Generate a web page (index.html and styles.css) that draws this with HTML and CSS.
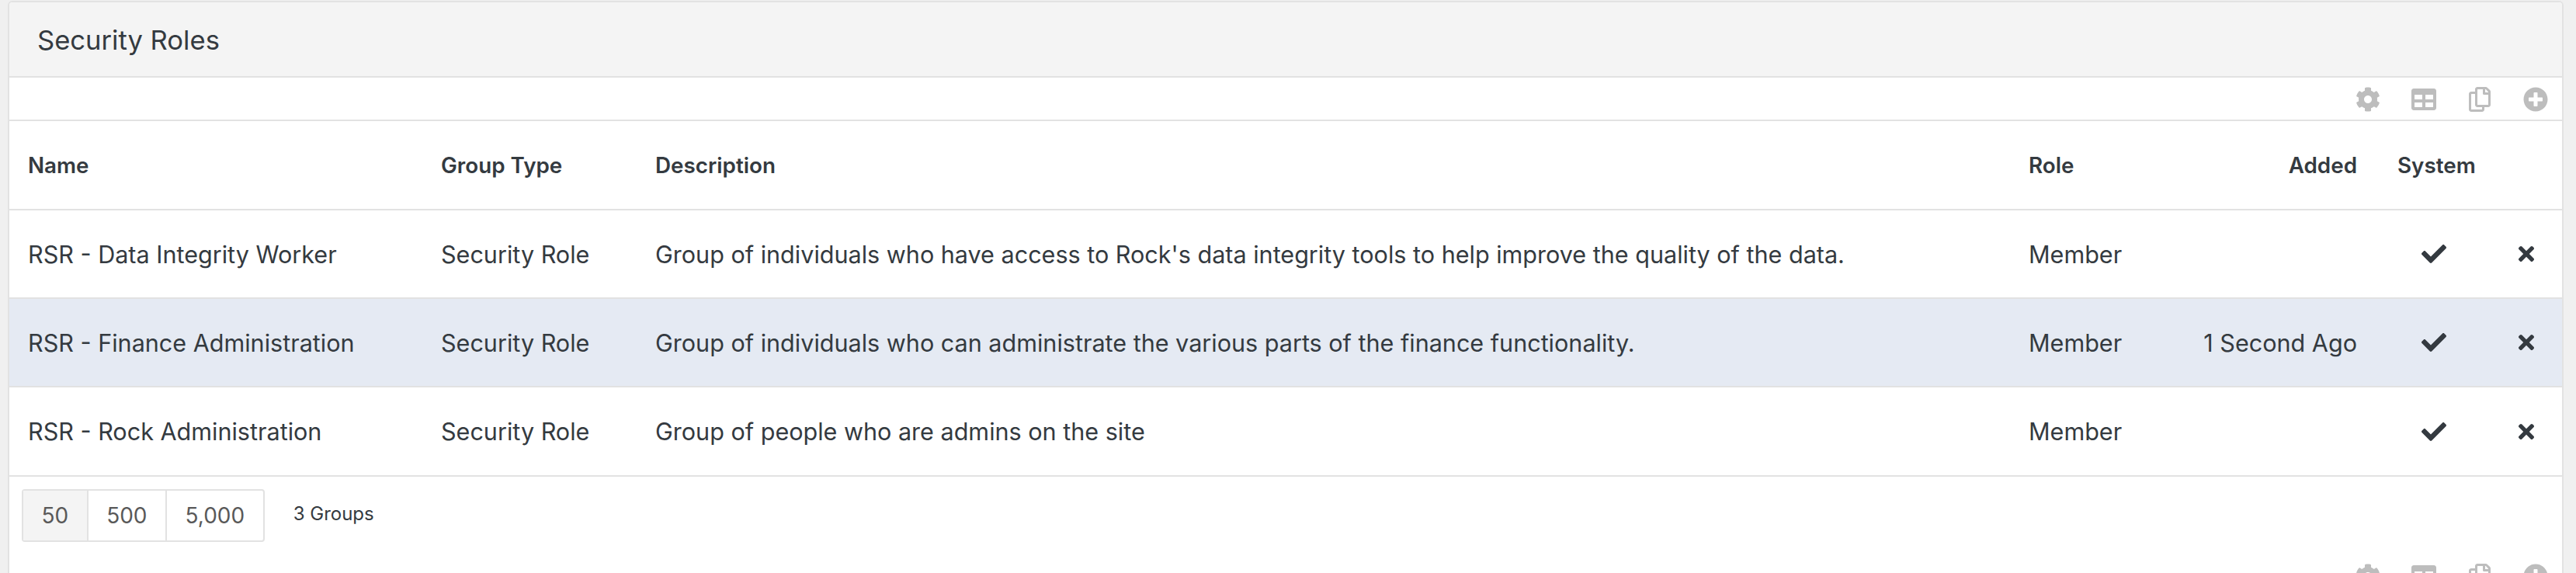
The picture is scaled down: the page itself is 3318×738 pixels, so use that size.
FILE: index.html
```html
<!DOCTYPE html>
<html lang="en">
<head>
<meta charset="utf-8">
<title>Security Roles</title>
<link rel="stylesheet" href="styles.css">
</head>
<body>
<svg class="defs" aria-hidden="true">
  <symbol id="i-cog" viewBox="0 0 512 512"><path d="M487.4 315.7l-42.6-24.6c4.3-23.2 4.3-47 0-70.2l42.6-24.6c4.9-2.8 7.1-8.6 5.5-14-11.1-35.6-30-67.8-54.7-94.6-3.8-4.1-10-5.1-14.8-2.3L380.8 110c-17.9-15.4-38.5-27.3-60.8-35.1V25.8c0-5.6-3.9-10.5-9.4-11.7-36.7-8.2-74.3-7.8-109.2 0-5.5 1.2-9.4 6.1-9.4 11.7V75c-22.2 7.9-42.8 19.8-60.8 35.1L88.7 85.5c-4.9-2.8-11-1.9-14.8 2.3-24.7 26.7-43.6 58.9-54.7 94.6-1.7 5.4.6 11.2 5.5 14L67.3 221c-4.3 23.2-4.3 47 0 70.2l-42.6 24.6c-4.9 2.8-7.1 8.6-5.5 14 11.1 35.6 30 67.8 54.7 94.6 3.8 4.1 10 5.1 14.8 2.3l42.6-24.6c17.9 15.4 38.5 27.3 60.8 35.1v49.2c0 5.6 3.9 10.5 9.4 11.7 36.7 8.2 74.3 7.8 109.2 0 5.5-1.2 9.4-6.1 9.4-11.7v-49.2c22.2-7.9 42.8-19.8 60.8-35.1l42.6 24.6c4.9 2.8 11 1.9 14.8-2.3 24.7-26.7 43.6-58.9 54.7-94.6 1.5-5.5-.7-11.3-5.6-14.1zM256 336c-44.1 0-80-35.9-80-80s35.9-80 80-80 80 35.9 80 80-35.9 80-80 80z"/></symbol>
  <symbol id="i-table" viewBox="0 0 512 512"><path d="M464 32H48C21.49 32 0 53.49 0 80v352c0 26.51 21.49 48 48 48h416c26.51 0 48-21.49 48-48V80c0-26.51-21.49-48-48-48zM224 416H64v-96h160v96zm0-160H64v-96h160v96zm224 160H288v-96h160v96zm0-160H288v-96h160v96z"/></symbol>
  <symbol id="i-copy" viewBox="0 0 448 512"><path d="M433.941 65.941l-51.882-51.882A48 48 0 0 0 348.118 0H176c-26.51 0-48 21.49-48 48v48H48c-26.51 0-48 21.49-48 48v320c0 26.51 21.49 48 48 48h224c26.51 0 48-21.49 48-48v-48h80c26.51 0 48-21.49 48-48V99.882a48 48 0 0 0-14.059-33.941zM266 464H54a6 6 0 0 1-6-6V150a6 6 0 0 1 6-6h74v224c0 26.51 21.49 48 48 48h96v42a6 6 0 0 1-6 6zm128-96H182a6 6 0 0 1-6-6V54a6 6 0 0 1 6-6h106v88c0 13.255 10.745 24 24 24h88v202a6 6 0 0 1-6 6zm6-256h-64V48h9.632c1.591 0 3.117.632 4.243 1.757l48.368 48.368a6 6 0 0 1 1.757 4.243V112z"/></symbol>
  <symbol id="i-plus" viewBox="0 0 512 512"><path d="M256 8C119 8 8 119 8 256s111 248 248 248 248-111 248-248S393 8 256 8zm144 276c0 6.6-5.4 12-12 12h-92v92c0 6.6-5.4 12-12 12h-56c-6.6 0-12-5.4-12-12v-92h-92c-6.6 0-12-5.4-12-12v-56c0-6.6 5.4-12 12-12h92v-92c0-6.6 5.4-12 12-12h56c6.6 0 12 5.4 12 12v92h92c6.6 0 12 5.4 12 12v56z"/></symbol>
  <symbol id="i-check" viewBox="0 0 512 512"><path d="M173.898 439.404l-166.4-166.4c-9.997-9.997-9.997-26.206 0-36.204l36.203-36.204c9.997-9.998 26.207-9.998 36.204 0L192 312.69 432.095 72.596c9.997-9.997 26.206-9.997 36.204 0l36.203 36.204c9.997 9.997 9.997 26.206 0 36.204l-294.4 294.401c-9.998 9.997-26.207 9.997-36.204-.001z"/></symbol>
  <symbol id="i-times" viewBox="0 0 352 512"><path d="M242.72 256l100.07-100.07c12.28-12.28 12.28-32.19 0-44.48l-22.24-22.24c-12.28-12.28-32.19-12.28-44.48 0L176 189.28 75.93 89.21c-12.28-12.28-32.19-12.28-44.48 0L9.21 111.45c-12.28 12.28-12.28 32.19 0 44.48L109.28 256 9.21 356.07c-12.28 12.28-12.28 32.19 0 44.48l22.24 22.24c12.28 12.28 32.2 12.28 44.48 0L176 322.72l100.07 100.07c12.28 12.28 32.2 12.28 44.48 0l22.24-22.24c12.28-12.28 12.28-32.19 0-44.48L242.72 256z"/></symbol>
</svg>
<section class="panel">
  <header class="panel-heading"><h1 class="panel-title">Security Roles</h1></header>
  <div class="actions">
    <svg class="act act-cog"><use href="#i-cog"/></svg>
    <svg class="act act-table"><use href="#i-table"/></svg>
    <svg class="act act-copy"><use href="#i-copy"/></svg>
    <svg class="act act-plus"><use href="#i-plus"/></svg>
  </div>
  <table class="grid">
    <colgroup>
      <col class="c-name"><col class="c-type"><col class="c-desc"><col class="c-role"><col class="c-added"><col class="c-sys"><col class="c-del">
    </colgroup>
    <thead>
      <tr><th>Name</th><th>Group Type</th><th>Description</th><th>Role</th><th class="right">Added</th><th class="sys-head">System</th><th></th></tr>
    </thead>
    <tbody>
      <tr>
        <td>RSR - Data Integrity Worker</td><td>Security Role</td>
        <td>Group of individuals who have access to Rock's data integrity tools to help improve the quality of the data.</td>
        <td>Member</td><td class="right"></td>
        <td class="center"><svg class="ic-check"><use href="#i-check"/></svg></td>
        <td class="del"><svg class="ic-times"><use href="#i-times"/></svg></td>
      </tr>
      <tr class="active">
        <td>RSR - Finance Administration</td><td>Security Role</td>
        <td>Group of individuals who can administrate the various parts of the finance functionality.</td>
        <td>Member</td><td class="right">1 Second Ago</td>
        <td class="center"><svg class="ic-check"><use href="#i-check"/></svg></td>
        <td class="del"><svg class="ic-times"><use href="#i-times"/></svg></td>
      </tr>
      <tr>
        <td>RSR - Rock Administration</td><td>Security Role</td>
        <td>Group of people who are admins on the site</td>
        <td>Member</td><td class="right"></td>
        <td class="center"><svg class="ic-check"><use href="#i-check"/></svg></td>
        <td class="del"><svg class="ic-times"><use href="#i-times"/></svg></td>
      </tr>
    </tbody>
  </table>
  <footer class="pager">
    <div class="sizes">
      <span class="size on">50</span><span class="size">500</span><span class="size">5,000</span>
    </div>
    <span class="count">3 Groups</span>
  </footer>
  <div class="actions actions-bottom">
    <svg class="act act-cog"><use href="#i-cog"/></svg>
    <svg class="act act-table"><use href="#i-table"/></svg>
    <svg class="act act-copy"><use href="#i-copy"/></svg>
    <svg class="act act-plus"><use href="#i-plus"/></svg>
  </div>
</section>
</body>
</html>
```
FILE: styles.css
```css
html, body {
  margin: 0;
  padding: 0;
  height: 738px;
  overflow: hidden;
  background: #f0f0f0;
}
body {
  font-family: Inter, "Liberation Sans", sans-serif;
  color: #343a40;
  box-sizing: border-box;
  padding: 1px 16px 0 10px;
}
.defs { display: none; }
.panel {
  background: #fff;
  border: 2px solid #e2e2e2;
  border-bottom: 0;
  border-radius: 6px 6px 0 0;
  height: 800px;
}
.panel-heading {
  height: 95px;
  background: #f4f4f4;
  border-bottom: 2px solid #e2e2e2;
  display: flex;
  align-items: center;
  padding-left: 36px;
  border-radius: 4px 4px 0 0;
}
.panel-title {
  margin: 0;
  font-size: 34.6px;
  font-weight: 400;
  color: #343a40;
}
.actions {
  height: 56px;
  box-sizing: border-box;
  border-bottom: 2px solid #e2e2e2;
  display: flex;
  align-items: flex-start;
  justify-content: flex-end;
  padding: 12px 18px 0 0;
}
.actions-bottom { border-bottom: 0; }
.act {
  height: 32px;
  fill: #bdbdbd;
  flex: none;
}
.act-cog { width: 32px; margin-right: 40px; }
.act-table { width: 32px; margin-right: 42px; }
.act-copy { width: 28px; margin-right: 42px; }
.act-plus { width: 32px; }
.grid {
  width: 100%;
  table-layout: fixed;
  border-collapse: collapse;
  font-size: 30.55px;
}
.c-name { width: 531px; }
.c-type { width: 276px; }
.c-desc { width: 1769px; }
.c-role { width: 200px; }
.c-added { width: 248px; }
.c-sys { width: 198px; }
.grid th, .grid td {
  text-align: left;
  padding: 0 0 0 25px;
  white-space: nowrap;
  vertical-align: middle;
  box-sizing: border-box;
}
.grid th {
  height: 114px;
  font-size: 27.8px;
  font-weight: 600;
}
.grid td {
  height: 114px;
  border-top: 2px solid #e2e2e2;
}
.grid th:first-child, .grid td:first-child { padding-left: 24px; }
.grid .right { text-align: right; padding: 0; }
.grid .center { text-align: center; padding: 0; }
.grid .sys-head { padding-left: 52px; }
.grid .del { text-align: center; padding: 0 26px 0 0; }
.grid tr.active td { background: #e5eaf3; }
.ic-check { width: 32px; height: 32px; fill: #343a40; display: block; margin: 0 auto; }
.ic-times { width: 20px; height: 30px; fill: #343a40; display: block; margin: 0 auto; }
.pager {
  height: 102px;
  box-sizing: border-box;
  border-top: 2px solid #e2e2e2;
  display: flex;
  align-items: flex-start;
  padding: 16px 0 0 16px;
}
.sizes {
  display: flex;
  height: 68px;
  box-sizing: border-box;
  border: 2px solid #e2e2e2;
  border-radius: 4px;
}
.size {
  display: flex;
  align-items: center;
  justify-content: center;
  font-size: 28px;
  color: #595959;
  padding: 0 23.5px;
  border-left: 2px solid #e2e2e2;
}
.size:first-child { border-left: 0; }
.size.on { background: #f4f4f4; }
.count {
  margin-left: 37px;
  line-height: 63px;
  font-size: 24px;
}
```
